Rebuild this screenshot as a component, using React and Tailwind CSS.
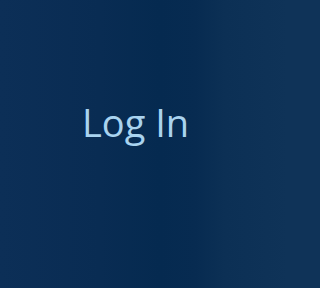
import React from "react";

const App = () => {
  return (
    <div className="w-screen h-screen bg-[linear-gradient(90deg,#0c2f57_0px,#092c53_100px,#052a50_160px,#072b51_195px,#0c3055_225px,#0f3358_288px)] flex items-start">
      <h1 className="ml-[82px] mt-[96px] text-[38px] leading-[52px] text-[#a9d3ef] font-['Open_Sans',sans-serif]">
        Log In
      </h1>
    </div>
  );
};

export default App;
